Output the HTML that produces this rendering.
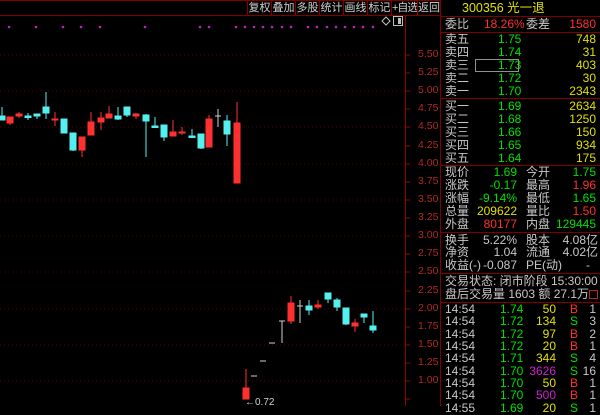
<!DOCTYPE html>
<html><head><meta charset="utf-8"><style>
*{margin:0;padding:0;box-sizing:border-box}
body{width:600px;height:406px;background:#000;overflow:hidden;position:relative;font-family:"Liberation Sans","Noto Sans CJK SC",sans-serif;font-size:11px;color:#c8c8c8}
.tb{position:absolute;top:0;height:16px;border:1px solid #800000;color:#d0d0d0;font-size:11px;line-height:14px;text-align:center;white-space:nowrap;overflow:hidden}
.r{position:absolute;left:440px;width:160px;height:13px;line-height:13px;font-size:12px;white-space:nowrap}
.r span{position:absolute}
.g{color:#00e000}.y{color:#e0e000}.rd{color:#ff3030}.w{color:#c8c8c8}.m{color:#d020d0}
.sep{position:absolute;left:440px;width:160px;height:1px;background:#800000}
.ax{position:absolute;left:418px;color:#b02828;font-size:10.5px;font-family:"Liberation Sans",sans-serif}
</style></head><body>
<div class="tb" style="left:-2px;width:250px"></div>
<div class="tb" style="left:247px;width:25px">复权</div>
<div class="tb" style="left:271px;width:25px">叠加</div>
<div class="tb" style="left:295px;width:25px">多股</div>
<div class="tb" style="left:319px;width:25px">统计</div>
<div class="tb" style="left:343px;width:25px">画线</div>
<div class="tb" style="left:367px;width:25px">标记</div>
<div class="tb" style="left:391px;width:27px;letter-spacing:-1px">+自选</div>
<div class="tb" style="left:417px;width:24px">返回</div>

<svg width="440" height="406" style="position:absolute;left:0;top:0">
<g fill="#c020c0">
<circle cx="9" cy="27" r="1.3"/><circle cx="36" cy="27" r="1.3"/><circle cx="63" cy="27" r="1.3"/><circle cx="81" cy="27" r="1.3"/><circle cx="100" cy="27" r="1.3"/><circle cx="145" cy="27" r="1.3"/><circle cx="200" cy="27" r="1.3"/><circle cx="209" cy="27" r="1.3"/><circle cx="236" cy="27" r="1.3"/><circle cx="245" cy="27" r="1.3"/><circle cx="254" cy="27" r="1.3"/><circle cx="263" cy="27" r="1.3"/><circle cx="272" cy="27" r="1.3"/><circle cx="282" cy="27" r="1.3"/><circle cx="291" cy="27" r="1.3"/><circle cx="308" cy="27" r="1.3"/><circle cx="317" cy="27" r="1.3"/><circle cx="327" cy="27" r="1.3"/><circle cx="336" cy="27" r="1.3"/><circle cx="345" cy="27" r="1.3"/><circle cx="354" cy="27" r="1.3"/><circle cx="363" cy="27" r="1.3"/><circle cx="373" cy="27" r="1.3"/>
</g>
<path d="M386 17l4 4-4 4-4-4z" fill="none" stroke="#c0c0c0"/>
<rect x="393.5" y="16.5" width="9" height="9" fill="none" stroke="#c0c0c0"/><rect x="398" y="18" width="3" height="6" fill="#c0c0c0"/>
<line x1="405.5" y1="16" x2="405.5" y2="406" stroke="#900000"/>
<g stroke="#500000" stroke-dasharray="1 3">
<line x1="0" y1="55" x2="405" y2="55"/><line x1="0" y1="91" x2="405" y2="91"/><line x1="0" y1="127" x2="405" y2="127"/><line x1="0" y1="164" x2="405" y2="164"/><line x1="0" y1="200" x2="405" y2="200"/><line x1="0" y1="236" x2="405" y2="236"/><line x1="0" y1="272" x2="405" y2="272"/><line x1="0" y1="309" x2="405" y2="309"/><line x1="0" y1="345" x2="405" y2="345"/><line x1="0" y1="381" x2="405" y2="381"/>
</g>
<g stroke="#900000">
<line x1="405" y1="55" x2="410" y2="55"/><line x1="405" y1="73" x2="410" y2="73"/><line x1="405" y1="91" x2="410" y2="91"/><line x1="405" y1="109" x2="410" y2="109"/><line x1="405" y1="127" x2="410" y2="127"/><line x1="405" y1="146" x2="410" y2="146"/><line x1="405" y1="164" x2="410" y2="164"/><line x1="405" y1="182" x2="410" y2="182"/><line x1="405" y1="200" x2="410" y2="200"/><line x1="405" y1="218" x2="410" y2="218"/><line x1="405" y1="236" x2="410" y2="236"/><line x1="405" y1="254" x2="410" y2="254"/><line x1="405" y1="272" x2="410" y2="272"/><line x1="405" y1="291" x2="410" y2="291"/><line x1="405" y1="309" x2="410" y2="309"/><line x1="405" y1="327" x2="410" y2="327"/><line x1="405" y1="345" x2="410" y2="345"/><line x1="405" y1="363" x2="410" y2="363"/><line x1="405" y1="381" x2="410" y2="381"/><line x1="405" y1="399" x2="410" y2="399"/>
</g>
<g stroke="#54f0f0" fill="#54f0f0">
<line x1="2" y1="107" x2="2" y2="120"/><rect x="-1" y="116" width="6" height="4"/>
<line x1="28" y1="113" x2="28" y2="120"/><rect x="25" y="116" width="6" height="1.5"/>
<line x1="37" y1="114" x2="37" y2="119"/><rect x="34" y="114" width="6" height="2"/>
<line x1="46" y1="92" x2="46" y2="119"/><rect x="43" y="107" width="6" height="6"/>
<line x1="64" y1="119" x2="64" y2="133"/><rect x="61" y="119" width="6" height="14"/>
<line x1="73" y1="133" x2="73" y2="151"/><rect x="70" y="133" width="6" height="17"/>
<line x1="118" y1="107" x2="118" y2="120"/><rect x="115" y="116" width="6" height="3"/>
<line x1="127" y1="107" x2="127" y2="117"/><rect x="124" y="107" width="6" height="8"/>
<line x1="146" y1="114" x2="146" y2="157"/><rect x="143" y="115" width="6" height="6"/>
<line x1="155" y1="117" x2="155" y2="127"/><rect x="152" y="126" width="6" height="1.5"/>
<line x1="164" y1="125" x2="164" y2="141"/><rect x="161" y="125" width="6" height="12"/>
<line x1="192" y1="129" x2="192" y2="138"/><rect x="189" y="136" width="6" height="1.5"/>
<line x1="201" y1="134" x2="201" y2="149"/><rect x="198" y="134" width="6" height="14"/>
<line x1="227" y1="115" x2="227" y2="146"/><rect x="224" y="121" width="6" height="13"/>
<line x1="309" y1="300" x2="309" y2="315"/><rect x="306" y="306" width="6" height="4"/>
<line x1="328" y1="293" x2="328" y2="303"/><rect x="325" y="293" width="6" height="6"/>
<line x1="337" y1="298" x2="337" y2="311"/><rect x="334" y="300" width="6" height="7"/>
<line x1="346" y1="308" x2="346" y2="325"/><rect x="343" y="308" width="6" height="16"/>
<line x1="364" y1="314" x2="364" y2="323"/><rect x="361" y="314" width="6" height="3"/>
<line x1="373" y1="311" x2="373" y2="333"/><rect x="370" y="326" width="6" height="4"/>
</g>
<g stroke="#ff3030" fill="#ff3030">
<line x1="10" y1="117" x2="10" y2="125"/><rect x="7" y="117" width="6" height="6"/>
<line x1="19" y1="112" x2="19" y2="118"/><rect x="16" y="114" width="6" height="2"/>
<line x1="55" y1="112" x2="55" y2="126"/><rect x="52" y="119" width="6" height="1"/>
<line x1="82" y1="137" x2="82" y2="157"/><rect x="79" y="137" width="6" height="13"/>
<line x1="91" y1="112" x2="91" y2="135"/><rect x="88" y="122" width="6" height="13"/>
<line x1="101" y1="112" x2="101" y2="130"/><rect x="98" y="118" width="6" height="4"/>
<line x1="109" y1="106" x2="109" y2="118"/><rect x="106" y="114" width="6" height="4"/>
<line x1="136" y1="113" x2="136" y2="119"/><rect x="133" y="114" width="6" height="2"/>
<line x1="173" y1="120" x2="173" y2="136"/><rect x="170" y="132" width="6" height="4"/>
<line x1="182" y1="127" x2="182" y2="135"/><rect x="179" y="132" width="6" height="1"/>
<line x1="209" y1="115" x2="209" y2="147"/><rect x="206" y="119" width="6" height="28"/>
<line x1="237" y1="102" x2="237" y2="183"/><rect x="234" y="123" width="6" height="60"/>
<line x1="246" y1="369" x2="246" y2="399"/><rect x="243" y="388" width="6" height="11"/>
<line x1="291" y1="296" x2="291" y2="324"/><rect x="288" y="303" width="6" height="18"/>
<line x1="318" y1="300" x2="318" y2="309"/><rect x="315" y="305" width="6" height="2"/>
<line x1="355" y1="319" x2="355" y2="332"/><rect x="352" y="323" width="6" height="3"/>
</g>
<g stroke="#d0d0d0" fill="#d0d0d0">
<line x1="218" y1="109" x2="218" y2="127"/><line x1="215" y1="116" x2="221" y2="116"/>
<line x1="251" y1="376" x2="257" y2="376"/>
<line x1="260" y1="361" x2="266" y2="361"/>
<line x1="269" y1="343" x2="275" y2="343"/>
<line x1="282" y1="321" x2="282" y2="343"/><line x1="279" y1="321" x2="285" y2="321"/>
<line x1="300" y1="300" x2="300" y2="323"/><line x1="297" y1="306" x2="303" y2="306"/>
</g>
<text x="245" y="405" fill="#d0d0d0" font-size="10" font-family="Liberation Sans">←0.72</text>
</svg>
<div class="ax" style="top:48px">5.50</div><div class="ax" style="top:66px">5.25</div><div class="ax" style="top:84px">5.00</div><div class="ax" style="top:102px">4.75</div><div class="ax" style="top:120px">4.50</div><div class="ax" style="top:139px">4.25</div><div class="ax" style="top:157px">4.00</div><div class="ax" style="top:175px">3.75</div><div class="ax" style="top:193px">3.50</div><div class="ax" style="top:211px">3.25</div><div class="ax" style="top:229px">3.00</div><div class="ax" style="top:247px">2.75</div><div class="ax" style="top:265px">2.50</div><div class="ax" style="top:284px">2.25</div><div class="ax" style="top:302px">2.00</div><div class="ax" style="top:320px">1.75</div><div class="ax" style="top:338px">1.50</div><div class="ax" style="top:356px">1.25</div><div class="ax" style="top:374px">1.00</div>

<div style="position:absolute;left:440px;top:0;width:1px;height:406px;background:#800000"></div>
<div class="r" style="top:2px"><span class="y" style="left:22px;font-size:12.5px">300356 光一退</span></div>
<div class="sep" style="top:16px"></div>
<div class="r" style="top:18px"><span class="w" style="left:5px">委比</span><span class="rd" style="left:44px">18.26%</span><span class="w" style="left:86px">委差</span><span class="rd" style="right:4px">1580</span></div>
<div class="sep" style="top:32px"></div>
<div class="r" style="top:33px"><span class="w" style="left:5px">卖五</span><span class="g" style="left:58px">1.75</span><span class="y" style="right:4px">748</span></div>
<div class="r" style="top:46px"><span class="w" style="left:5px">卖四</span><span class="g" style="left:58px">1.74</span><span class="y" style="right:4px">31</span></div>
<div class="r" style="top:59px"><span class="w" style="left:5px">卖三</span><span class="g" style="left:58px">1.73</span><span class="y" style="right:4px">403</span><span style="left:35px;top:0;width:44px;height:13px;border:1px solid #909090"></span></div>
<div class="r" style="top:72px"><span class="w" style="left:5px">卖二</span><span class="g" style="left:58px">1.72</span><span class="y" style="right:4px">30</span></div>
<div class="r" style="top:85px"><span class="w" style="left:5px">卖一</span><span class="g" style="left:58px">1.70</span><span class="y" style="right:4px">2343</span></div>
<div class="sep" style="top:98px"></div>
<div class="r" style="top:100px"><span class="w" style="left:5px">买一</span><span class="g" style="left:58px">1.69</span><span class="y" style="right:4px">2634</span></div>
<div class="r" style="top:113px"><span class="w" style="left:5px">买二</span><span class="g" style="left:58px">1.68</span><span class="y" style="right:4px">1250</span></div>
<div class="r" style="top:126px"><span class="w" style="left:5px">买三</span><span class="g" style="left:58px">1.66</span><span class="y" style="right:4px">150</span></div>
<div class="r" style="top:139px"><span class="w" style="left:5px">买四</span><span class="g" style="left:58px">1.65</span><span class="y" style="right:4px">934</span></div>
<div class="r" style="top:152px"><span class="w" style="left:5px">买五</span><span class="g" style="left:58px">1.64</span><span class="y" style="right:4px">175</span></div>
<div class="sep" style="top:165px"></div>
<div class="r" style="top:166px"><span class="w" style="left:5px">现价</span><span class="g" style="right:83px">1.69</span><span class="w" style="left:86px">今开</span><span class="g" style="right:4px">1.75</span></div>
<div class="r" style="top:179px"><span class="w" style="left:5px">涨跌</span><span class="g" style="right:83px">-0.17</span><span class="w" style="left:86px">最高</span><span class="rd" style="right:4px">1.96</span></div>
<div class="r" style="top:192px"><span class="w" style="left:5px">涨幅</span><span class="g" style="right:83px">-9.14%</span><span class="w" style="left:86px">最低</span><span class="g" style="right:4px">1.65</span></div>
<div class="r" style="top:205px"><span class="w" style="left:5px">总量</span><span class="y" style="right:83px">209622</span><span class="w" style="left:86px">量比</span><span class="rd" style="right:4px">1.50</span></div>
<div class="r" style="top:218px"><span class="w" style="left:5px">外盘</span><span class="rd" style="right:83px">80177</span><span class="w" style="left:86px">内盘</span><span class="g" style="right:4px">129445</span></div>
<div class="sep" style="top:232px"></div>
<div class="r" style="top:234px"><span class="w" style="left:5px">换手</span><span class="w" style="right:83px">5.22%</span><span class="w" style="left:86px">股本</span><span class="w" style="right:2px">4.08亿</span></div>
<div class="r" style="top:246px"><span class="w" style="left:5px">净资</span><span class="w" style="right:83px">1.04</span><span class="w" style="left:86px">流通</span><span class="w" style="right:2px">4.02亿</span></div>
<div class="r" style="top:259px"><span class="w" style="left:5px">收益(-)</span><span class="w" style="right:83px">-0.087</span><span class="w" style="left:86px">PE(动)</span><span class="w" style="right:10px">-</span></div>
<div class="sep" style="top:273px"></div>
<div class="r" style="top:275px"><span class="w" style="left:5px">交易状态: 闭市阶段 15:30:00</span></div>
<div class="r" style="top:288px"><span class="w" style="left:5px">盘后交易量 1603 额 27.1万</span><span style="right:2px;top:2px;width:9px;height:9px;border:1px solid #c02020"></span></div>
<div class="sep" style="top:302px"></div>
<div class="r" style="top:303px"><span class="w" style="left:5px">14:54</span><span class="g" style="left:60px">1.74</span><span class="y" style="right:44px">50</span><span class="rd" style="left:130px">B</span><span class="w" style="right:4px">1</span></div>
<div class="r" style="top:315px"><span class="w" style="left:5px">14:54</span><span class="g" style="left:60px">1.72</span><span class="y" style="right:44px">134</span><span class="g" style="left:130px">S</span><span class="w" style="right:4px">3</span></div>
<div class="r" style="top:328px"><span class="w" style="left:5px">14:54</span><span class="g" style="left:60px">1.72</span><span class="y" style="right:44px">97</span><span class="rd" style="left:130px">B</span><span class="w" style="right:4px">2</span></div>
<div class="r" style="top:340px"><span class="w" style="left:5px">14:54</span><span class="g" style="left:60px">1.72</span><span class="y" style="right:44px">20</span><span class="rd" style="left:130px">B</span><span class="w" style="right:4px">1</span></div>
<div class="r" style="top:352px"><span class="w" style="left:5px">14:54</span><span class="g" style="left:60px">1.71</span><span class="y" style="right:44px">344</span><span class="g" style="left:130px">S</span><span class="w" style="right:4px">4</span></div>
<div class="r" style="top:365px"><span class="w" style="left:5px">14:54</span><span class="g" style="left:60px">1.70</span><span class="m" style="right:44px">3626</span><span class="g" style="left:130px">S</span><span class="w" style="right:4px">16</span></div>
<div class="r" style="top:377px"><span class="w" style="left:5px">14:54</span><span class="g" style="left:60px">1.70</span><span class="y" style="right:44px">50</span><span class="rd" style="left:130px">B</span><span class="w" style="right:4px">1</span></div>
<div class="r" style="top:389px"><span class="w" style="left:5px">14:54</span><span class="g" style="left:60px">1.70</span><span class="m" style="right:44px">500</span><span class="rd" style="left:130px">B</span><span class="w" style="right:4px">1</span></div>
<div class="r" style="top:402px"><span class="w" style="left:5px">14:55</span><span class="g" style="left:60px">1.69</span><span class="y" style="right:44px">20</span><span class="g" style="left:130px">S</span><span class="w" style="right:4px">1</span></div>
</body></html>
